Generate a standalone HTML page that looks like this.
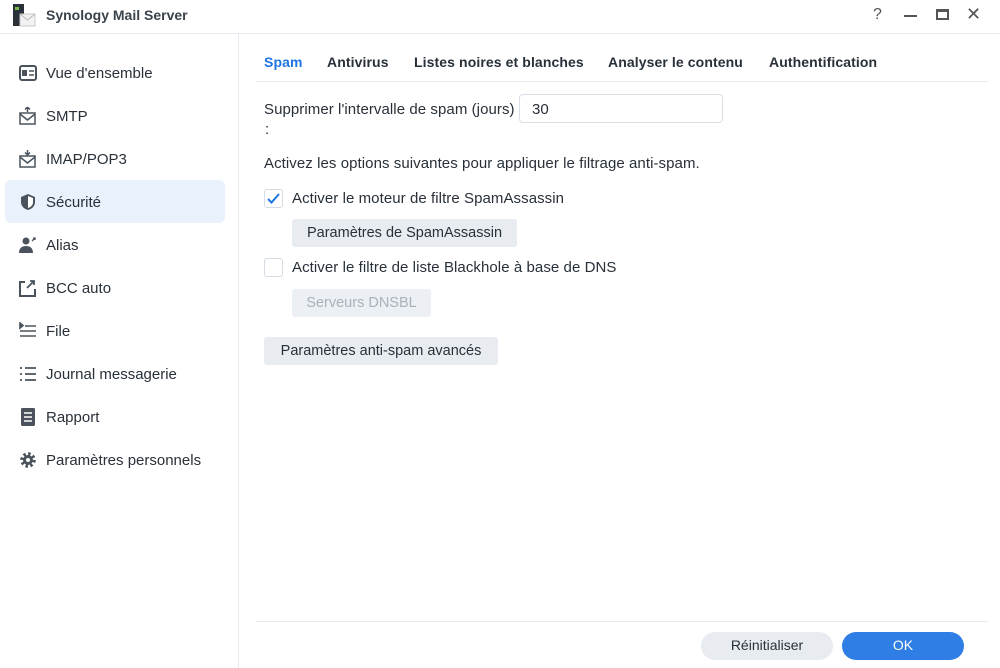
<!DOCTYPE html>
<html><head><meta charset="utf-8"><style>
*{box-sizing:border-box;margin:0;padding:0}
body{width:1000px;height:668px;background:#fff;font-family:"Liberation Sans",sans-serif;color:#283039;position:relative;overflow:hidden;font-size:14px}
.title{position:absolute;left:0;top:0;width:1000px;height:34px;border-bottom:1px solid #e6ebf1}
.title .t{position:absolute;left:46px;top:7px;font-weight:bold;font-size:14px;color:#3a434c}
.side{position:absolute;left:0;top:34px;width:239px;height:634px;border-right:1px solid #e6ebf1}
.item{position:absolute;left:5px;width:220px;height:43px;border-radius:6px;font-size:15px}
.item span{position:absolute;left:41px;top:14px}
.item svg{position:absolute;left:14px;top:13px}
.sel{background:#e9f1fc}
.tabs{position:absolute;left:256px;top:81px;width:732px;border-top:1px solid #e6ebf1}
.tab{position:absolute;top:54px;font-weight:bold;font-size:14px;letter-spacing:0.1px;color:#283039}
.txt{position:absolute;font-size:15px;letter-spacing:0.07px;color:#283039}
.btn{position:absolute;background:#e8ecf1;border-radius:3px;font-size:14.5px;text-align:center;color:#283039}
.cb{position:absolute;width:19px;height:19px;border:1px solid #d5dbe2;border-radius:3px;background:#fff}
</style></head><body>
<div class="title">
<svg style="position:absolute;left:12px;top:4px" width="24" height="24"><rect x="1" y="0" width="11" height="22" fill="#2a3138"/><rect x="3" y="3" width="4" height="3" fill="#7ab648"/><rect x="8" y="10" width="15" height="12" fill="#f2f2f2" stroke="#c9c9c9"/><path d="M8 10l7.5 6 7.5-6" stroke="#bbb" fill="none"/></svg>
<div class="t">Synology Mail Server</div>
<div style="position:absolute;left:873px;top:6px;font-size:16px;color:#555">?</div>
<div style="position:absolute;left:904px;top:15px;width:13px;height:2px;background:#555"></div>
<div style="position:absolute;left:936px;top:9px;width:13px;height:11px;border:2px solid #555;border-top-width:3px"></div>
<div style="position:absolute;left:966px;top:4px;font-size:18px;color:#555">✕</div>
</div>
<div class="side">
<div class="item" style="top:17px"><svg width="18" height="18"><rect x="1" y="2" width="16" height="14" rx="2" fill="none" stroke="#4a535c" stroke-width="2"/><rect x="3" y="6" width="5" height="6" fill="#4a535c"/><path d="M10 7h5M10 11h5" stroke="#4a535c" stroke-width="1.5"/></svg><span>Vue d'ensemble</span></div>
<div class="item" style="top:60px"><svg width="18" height="18"><rect x="1" y="6" width="15" height="11" fill="none" stroke="#4a535c" stroke-width="1.5"/><path d="M1 7l7.5 6 7.5-6M8.5 0v5M6 2.5l2.5-2.5 2.5 2.5" stroke="#4a535c" stroke-width="1.5" fill="none"/></svg><span>SMTP</span></div>
<div class="item" style="top:103px"><svg width="18" height="18"><rect x="1" y="6" width="15" height="11" fill="none" stroke="#4a535c" stroke-width="1.5"/><path d="M1 7l7.5 6 7.5-6M8.5 0v5M6 2.5l2.5 2.5 2.5-2.5" stroke="#4a535c" stroke-width="1.5" fill="none"/></svg><span>IMAP/POP3</span></div>
<div class="item sel" style="top:146px"><svg width="18" height="18"><path d="M9 1l7 3v5c0 4-3 7-7 8-4-1-7-4-7-8V4z" fill="#4a535c"/><path d="M9 3l5 2v4c0 3-2 5-5 6z" fill="#fff"/></svg><span>Sécurité</span></div>
<div class="item" style="top:189px"><svg width="18" height="18"><circle cx="7" cy="5" r="3.5" fill="#4a535c"/><path d="M0 17c0-5 3-7 7-7s7 2 7 7z" fill="#4a535c"/><path d="M13 5l3-3M14 2h2v2" stroke="#4a535c" stroke-width="1.3" fill="none"/></svg><span>Alias</span></div>
<div class="item" style="top:232px"><svg width="18" height="18"><path d="M6 3H1v14h15v-7" fill="none" stroke="#4a535c" stroke-width="2"/><path d="M8 9l7-7M11 2h4v4" stroke="#4a535c" stroke-width="1.8" fill="none"/></svg><span>BCC auto</span></div>
<div class="item" style="top:275px"><svg width="18" height="18"><path d="M1 1v5l3-2.5zM6 4h11M1 9h16M1 14h16" stroke="#4a535c" stroke-width="1.6" fill="#4a535c"/></svg><span>File</span></div>
<div class="item" style="top:318px"><svg width="18" height="18"><path d="M1 3h2M6 3h11M1 9h2M6 9h11M1 15h2M6 15h11" stroke="#4a535c" stroke-width="1.8"/></svg><span>Journal messagerie</span></div>
<div class="item" style="top:361px"><svg width="18" height="18"><rect x="2" y="0" width="14" height="18" rx="1.5" fill="#4a535c"/><path d="M5 5h8M5 9h8M5 13h8" stroke="#fff" stroke-width="1.5"/></svg><span>Rapport</span></div>
<div class="item" style="top:404px"><svg width="18" height="18"><circle cx="9" cy="9" r="6" fill="none" stroke="#4a535c" stroke-width="3.5" stroke-dasharray="2.4 2.3"/><circle cx="9" cy="9" r="5" fill="#4a535c"/><circle cx="9" cy="9" r="2" fill="#fff"/></svg><span>Paramètres personnels</span></div>
</div>
<div class="tab" style="left:264px;color:#1f76e2">Spam</div>
<div class="tab" style="left:327px">Antivirus</div>
<div class="tab" style="left:414px">Listes noires et blanches</div>
<div class="tab" style="left:608px">Analyser le contenu</div>
<div class="tab" style="left:769px">Authentification</div>
<div class="tabs"></div>
<div class="txt" style="left:264px;top:101px">Supprimer l'intervalle de spam (jours)</div>
<div class="txt" style="left:265px;top:121px">:</div>
<div style="position:absolute;left:519px;top:94px;width:204px;height:29px;border:1px solid #d9dfe6;border-radius:4px;padding:6px 0 0 12px;font-size:15px">30</div>
<div class="txt" style="left:264px;top:155px">Activez les options suivantes pour appliquer le filtrage anti-spam.</div>
<div class="cb" style="left:264px;top:189px"><svg width="17" height="17"><path d="M3 9l3.5 3.5L14 4" stroke="#1f76e2" stroke-width="2" fill="none"/></svg></div>
<div class="txt" style="left:292px;top:190px">Activer le moteur de filtre SpamAssassin</div>
<div class="btn" style="left:292px;top:219px;width:225px;height:28px;padding-top:6px">Paramètres de SpamAssassin</div>
<div class="cb" style="left:264px;top:258px"></div>
<div class="txt" style="left:292px;top:259px">Activer le filtre de liste Blackhole à base de DNS</div>
<div class="btn" style="left:292px;top:289px;width:139px;height:28px;padding-top:6px;color:#a9b1ba;background:#eceff3">Serveurs DNSBL</div>
<div class="btn" style="left:264px;top:337px;width:234px;height:28px;padding-top:6px">Paramètres anti-spam avancés</div>
<div style="position:absolute;left:256px;top:621px;width:732px;border-top:1px solid #e6ebf1"></div>
<div class="btn" style="left:701px;top:632px;width:132px;height:28px;border-radius:14px;padding-top:5px;font-size:14px">Réinitialiser</div>
<div class="btn" style="left:842px;top:632px;width:122px;height:28px;border-radius:14px;padding-top:5px;font-size:14px;background:#2f7ee6;color:#fff">OK</div>
</body></html>
